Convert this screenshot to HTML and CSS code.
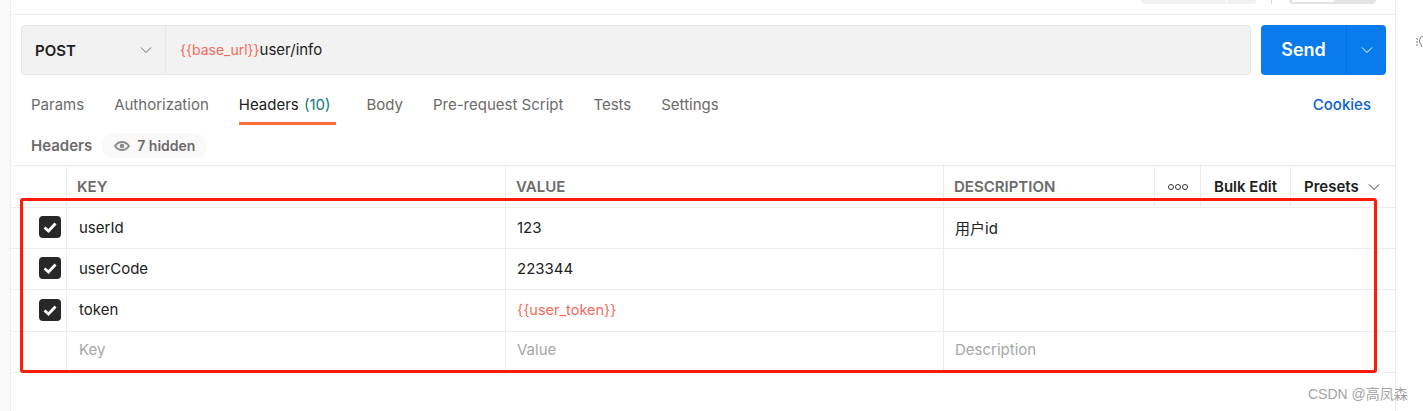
FILE: index.html
```html
<!DOCTYPE html>
<html lang="zh-CN">
<head>
  <meta charset="UTF-8">
  <title>Postman Headers</title>
  <link rel="stylesheet" href="styles.css">
</head>
<body>
<div class="sidebar"></div>

<div class="main">
  <div class="topbar">
    <div class="save-group">
      <span class="save-btn"></span>
      <span class="save-more"></span>
    </div>
    <span class="top-divider"></span>
    <div class="toggle"><span class="toggle-on"></span></div>
  </div>

  <div class="url-row">
    <div class="url-box">
      <div class="method">
        <span>POST</span>
        <svg class="chevron" width="12" height="12" viewBox="0 0 12 12"><path d="M1 3.500 6 8.500 11 3.500" fill="none" stroke="#6b6b6b" stroke-width="1"/></svg>
      </div>
      <div class="url-text"><span class="var">{{base_url}}</span>user/info</div>
    </div>
    <div class="send">
      <span class="send-label">Send</span>
      <span class="send-more">
        <svg width="12" height="12" viewBox="0 0 12 12"><path d="M1 3.500 6 8.500 11 3.500" fill="none" stroke="#fff" stroke-width="1"/></svg>
      </span>
    </div>
  </div>

  <div class="tabs">
    <span class="tab">Params</span>
    <span class="tab">Authorization</span>
    <span class="tab active">Headers <em>(10)</em></span>
    <span class="tab">Body</span>
    <span class="tab">Pre-request Script</span>
    <span class="tab">Tests</span>
    <span class="tab">Settings</span>
    <span class="cookies">Cookies</span>
  </div>

  <div class="sub-row">
    <span class="sub-title">Headers</span>
    <span class="pill">
      <svg width="16" height="10" viewBox="0 0 16 10"><path d="M1 5C3 2 5.300 1 8 1s5 1 7 4c-2 3-4.300 4-7 4S3 8 1 5Z" fill="none" stroke="#8a8a8a" stroke-width="1.800"/><circle cx="8" cy="5" r="2.300" fill="#8a8a8a"/></svg>
      7 hidden
    </span>
  </div>

  <div class="table">
    <div class="row head">
      <div class="cell check"></div>
      <div class="cell">KEY</div>
      <div class="cell">VALUE</div>
      <div class="cell">DESCRIPTION</div>
      <div class="cell dots"><i></i><i></i><i></i></div>
      <div class="cell action">Bulk Edit</div>
      <div class="cell action presets">Presets
        <svg width="12" height="12" viewBox="0 0 12 12"><path d="M1 3.500 6 8.500 11 3.500" fill="none" stroke="#333" stroke-width="1"/></svg>
      </div>
    </div>
    <div class="row">
      <div class="cell check"><span class="box"><svg width="18" height="18" viewBox="0 0 18 18"><path d="M3.500 9.500 7.500 13 14.500 5.500" fill="none" stroke="#fff" stroke-width="2.800"/></svg></span></div>
      <div class="cell">userId</div>
      <div class="cell">123</div>
      <div class="cell">用户id</div>
    </div>
    <div class="row">
      <div class="cell check"><span class="box"><svg width="18" height="18" viewBox="0 0 18 18"><path d="M3.500 9.500 7.500 13 14.500 5.500" fill="none" stroke="#fff" stroke-width="2.800"/></svg></span></div>
      <div class="cell">userCode</div>
      <div class="cell">223344</div>
      <div class="cell"></div>
    </div>
    <div class="row tall">
      <div class="cell check"><span class="box"><svg width="18" height="18" viewBox="0 0 18 18"><path d="M3.500 9.500 7.500 13 14.500 5.500" fill="none" stroke="#fff" stroke-width="2.800"/></svg></span></div>
      <div class="cell">token</div>
      <div class="cell var">{{user_token}}</div>
      <div class="cell"></div>
    </div>
    <div class="row hint">
      <div class="cell check"></div>
      <div class="cell">Key</div>
      <div class="cell">Value</div>
      <div class="cell">Description</div>
    </div>
  </div>
</div>

<!-- annotation drawn over the screenshot -->
<div class="red-box"></div>
<svg class="bulb" width="8" height="18" viewBox="0 0 8 18"><path d="M8 2C5.500 2.500 4.500 5 4.500 7S6 10.500 7 13M1 4.500 3 5.500M1 8H3M1 11.500 3 10.500" fill="none" stroke="#777" stroke-width="1"/></svg>
<div class="watermark">CSDN @高凤森</div>
</body>
</html>
```

FILE: styles.css
```css
* {
  box-sizing: border-box;
}

body {
  margin: 0;
  height: 411px;
  overflow: hidden;
  display: flex;
  background: #fff;
  font-family: Inter, "Noto Sans CJK SC", sans-serif;
  font-size: 15px;
  color: #212121;
}

.sidebar {
  width: 11px;
  background: #f9f9f9;
  border-right: 1px solid #ededed;
}

.main {
  width: 1385px;
  border-right: 1px solid #ededed;
}

.topbar {
  height: 15px;
  border-bottom: 1px solid #ededed;
  display: flex;
  align-items: flex-start;
  padding-left: 1130px;
}

.save-group {
  display: flex;
  gap: 1px;
}

.save-btn {
  width: 85px;
  height: 4px;
  background: #f2f2f2;
  border-radius: 0 0 0 4px;
}

.save-more {
  width: 29px;
  height: 4px;
  background: #f2f2f2;
  border-radius: 0 0 4px 0;
}

.top-divider {
  width: 1px;
  height: 4px;
  margin-left: 15px;
  background: #d6d6d6;
}

.toggle {
  width: 87px;
  height: 4px;
  margin-left: 17px;
  background: #e4e4e4;
  border-radius: 0 0 5px 5px;
}

.toggle-on {
  display: block;
  width: 42px;
  height: 2px;
  margin-left: 3px;
  background: #fff;
  border-radius: 0 0 3px 3px;
}

.url-row {
  display: flex;
  gap: 10px;
  padding: 10px 0 0 10px;
}

.url-box {
  width: 1230px;
  height: 50px;
  display: flex;
  background: #f2f2f2;
  border: 1px solid #e6e6e6;
  border-radius: 4px;
}

.method {
  width: 144px;
  padding: 0 13px;
  display: flex;
  align-items: center;
  justify-content: space-between;
  border-right: 1px solid #e6e6e6;
  font-weight: 600;
}

.url-text {
  padding-left: 14px;
  line-height: 48px;
}

.url-text .var {
  font-size: 14px;
}

.var {
  color: #f26b5b;
}

.send {
  width: 125px;
  height: 50px;
  display: flex;
  background: #097bed;
  border-radius: 4px;
  color: #fff;
}

.send-label {
  flex: 1;
  text-align: center;
  line-height: 50px;
  font-size: 18px;
  font-weight: 600;
}

.send-more {
  width: 40px;
  display: flex;
  align-items: center;
  justify-content: center;
  border-left: 1px solid #0a6fd6;
}

.tabs {
  height: 48px;
  margin-top: 1px;
  padding: 0 24px 0 20px;
  display: flex;
  gap: 30px;
  color: #6b6b6b;
}

.tab {
  height: 49px;
  line-height: 58px;
}

.tab.active {
  color: #212121;
  border-bottom: 3px solid #ff6c37;
  padding-right: 6px;
}

.tab em {
  font-style: normal;
  color: #0b7a75;
  margin-left: 1px;
}

.cookies {
  margin-left: auto;
  line-height: 58px;
  color: #0b5fd6;
  font-weight: 500;
}

.sub-row {
  height: 41px;
  padding: 9px 0 0 20px;
  display: flex;
  align-items: flex-start;
  gap: 10px;
}

.sub-title {
  line-height: 25px;
  font-weight: 600;
  color: #6b6b6b;
}

.pill {
  width: 105px;
  height: 25px;
  padding-left: 12px;
  display: flex;
  align-items: center;
  gap: 7px;
  background: #f9f9f9;
  border-radius: 12px;
  font-size: 14px;
  font-weight: 600;
  color: #6b6b6b;
}

.table {
  border-top: 1px solid #ededed;
}

.row {
  height: 41px;
  display: grid;
  grid-template-columns: 55px 439px 438px 1fr;
  border-bottom: 1px solid #ededed;
}

.row.tall {
  height: 42px;
}

.row.head {
  height: 42px;
  grid-template-columns: 55px 439px 438px 211px 46px 90px 1fr;
  font-weight: 600;
  color: #6b6b6b;
}

.cell {
  display: flex;
  align-items: center;
  padding-left: 12px;
  padding-bottom: 2px;
  border-left: 1px solid #ededed;
}

.cell:nth-child(n+3) {
  padding-left: 11px;
}

.cell.var {
  font-size: 14.500px;
}

.row.head .cell {
  padding-left: 10px;
  padding-bottom: 0;
}

.cell.check {
  border-left: 0;
  padding-left: 28px;
}

.box {
  width: 22px;
  height: 22px;
  display: flex;
  align-items: center;
  justify-content: center;
  background: #282828;
  border-radius: 4px;
}

.row.head .cell.dots {
  gap: 1px;
  padding-left: 13px;
}

.dots i {
  width: 6px;
  height: 6px;
  border: 1.500px solid #333;
  border-radius: 50%;
}

.row.head .cell.action {
  color: #212121;
  padding-left: 13px;
}

.cell.presets {
  gap: 9px;
}

.row.hint .cell {
  padding-bottom: 5px;
  color: #a6a6a6;
}

.red-box {
  position: absolute;
  left: 20px;
  top: 198px;
  width: 1357px;
  height: 175px;
  border: 3px solid #ff1c0c;
  border-radius: 3px;
}

.bulb {
  position: absolute;
  left: 1415px;
  top: 34px;
}

.watermark {
  position: absolute;
  left: 1308px;
  top: 383px;
  font-family: "Liberation Sans", "Noto Sans CJK SC", sans-serif;
  font-size: 14px;
  color: #a3a3a3;
}
```
